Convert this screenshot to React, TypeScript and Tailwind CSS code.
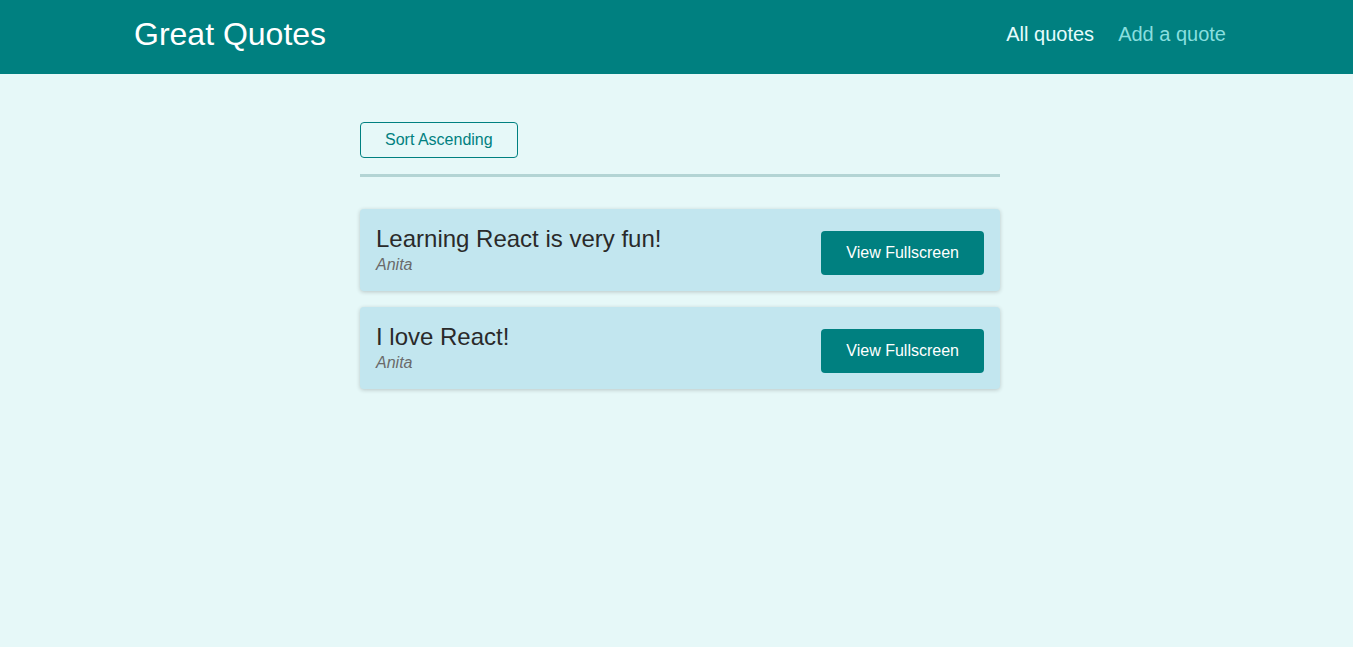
const quotes = [
  { id: "q1", text: "Learning React is very fun!", author: "Anita" },
  { id: "q2", text: "I love React!", author: "Anita" },
];

const QuoteItem = ({ text, author }: { text: string; author: string }) => {
  return (
    <li className="flex items-center justify-between rounded bg-[#c2e6ef] px-4 py-4 shadow-[0_1px_4px_rgba(0,0,0,0.2)]">
      <figure>
        <blockquote className="text-[24px] leading-[27px] text-[#2a2a2a]">{text}</blockquote>
        <figcaption className="mt-[3px] text-[16px] leading-[20px] italic text-[#6a6a6a]">{author}</figcaption>
      </figure>
      <a className="mt-[5px] rounded bg-[#008080] px-[25px] py-[12px] text-[16px] leading-[20px] text-white">
        View Fullscreen
      </a>
    </li>
  );
};

export default function App() {
  return (
    <div className="min-h-[647px] w-full bg-[#e6f8f8] font-['Liberation_Sans',Arial,sans-serif]">
      <header className="flex h-[74px] items-center justify-between bg-[#008080] pb-[6px] pl-[134px] pr-[127px]">
        <div className="text-[32px] leading-none text-white">Great Quotes</div>
        <nav>
          <ul className="flex gap-6 text-[20px]">
            <li className="text-[#e6fcfc]">All quotes</li>
            <li className="text-[#88dfdf]">Add a quote</li>
          </ul>
        </nav>
      </header>
      <main className="ml-[360px] w-[640px] pt-[48px]">
        <div className="border-b-[3px] border-[#b3d4d4] pb-4">
          <button className="h-[36px] rounded border border-[#008080] bg-transparent px-6 text-[16px] text-[#008080]">
            Sort Ascending
          </button>
        </div>
        <ul className="mt-[32px] flex flex-col gap-4">
          {quotes.map((q) => (
            <QuoteItem key={q.id} text={q.text} author={q.author} />
          ))}
        </ul>
      </main>
    </div>
  );
}
